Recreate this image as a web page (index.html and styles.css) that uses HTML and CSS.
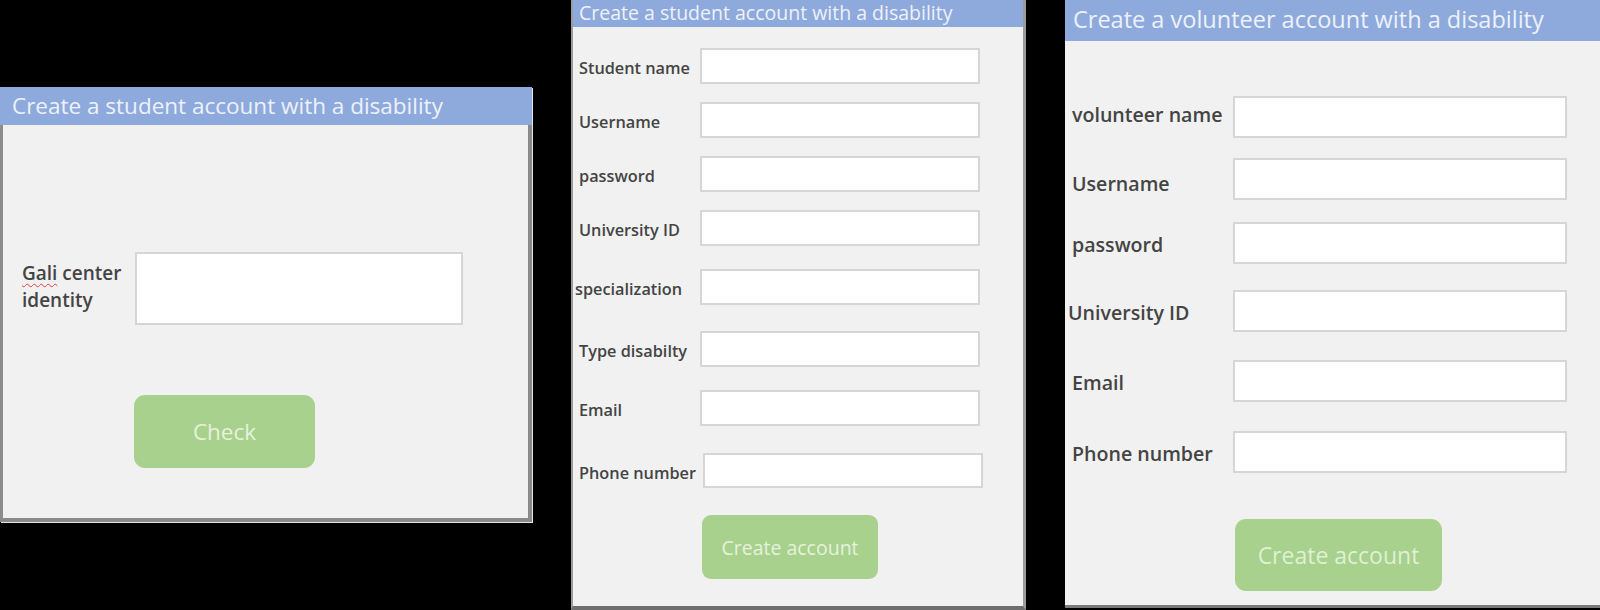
FILE: index.html
```html
<!DOCTYPE html>
<html lang="en">
<head>
<meta charset="utf-8">
<title>Account forms</title>
<link rel="stylesheet" href="styles.css">
</head>
<body>
<main class="canvas">
  <section class="panel panel-check">
    <header class="panel-title">Create a student account with a disability</header>
    <div class="panel-body">
      <div class="field">
        <label class="field-label"><span class="misspelled">Gali</span> center<br>identity</label>
        <input class="field-input" type="text">
      </div>
      <button class="btn" type="button">Check</button>
    </div>
  </section>

  <section class="panel panel-student">
    <header class="panel-title">Create a student account with a disability</header>
    <div class="panel-body">
      <div class="field"><label class="field-label">Student name</label><input class="field-input" type="text"></div>
      <div class="field"><label class="field-label">Username</label><input class="field-input" type="text"></div>
      <div class="field"><label class="field-label">password</label><input class="field-input" type="text"></div>
      <div class="field"><label class="field-label">University ID</label><input class="field-input" type="text"></div>
      <div class="field"><label class="field-label field-label-shift">specialization</label><input class="field-input" type="text"></div>
      <div class="field"><label class="field-label">Type disabilty</label><input class="field-input" type="text"></div>
      <div class="field"><label class="field-label">Email</label><input class="field-input" type="text"></div>
      <div class="field"><label class="field-label">Phone number</label><input class="field-input field-input-phone" type="text"></div>
      <button class="btn" type="button">Create account</button>
    </div>
  </section>

  <section class="panel panel-volunteer">
    <header class="panel-title">Create a volunteer account with a disability</header>
    <div class="panel-body">
      <div class="field"><label class="field-label field-label-raise">volunteer name</label><input class="field-input" type="text"></div>
      <div class="field"><label class="field-label field-label-drop">Username</label><input class="field-input" type="text"></div>
      <div class="field"><label class="field-label">password</label><input class="field-input" type="text"></div>
      <div class="field"><label class="field-label field-label-shift">University ID</label><input class="field-input" type="text"></div>
      <div class="field"><label class="field-label">Email</label><input class="field-input" type="text"></div>
      <div class="field"><label class="field-label">Phone number</label><input class="field-input" type="text"></div>
      <button class="btn" type="button">Create account</button>
    </div>
  </section>
</main>
</body>
</html>
```
FILE: styles.css
```css
* { box-sizing: border-box; }

html, body {
  margin: 0;
  padding: 0;
  background: #000;
  overflow: hidden;
}

body {
  width: 1600px;
  height: 610px;
  font-family: "Open Sans", "Noto Sans", sans-serif;
  color: #3b3b3b;
}

.canvas {
  display: flex;
  align-items: flex-start;
  gap: 39px;
  height: 610px;
}

.panel {
  flex-shrink: 0;
  background: #f1f1f1;
  display: flex;
  flex-direction: column;
}

.panel-title {
  background: #8eaadc;
  color: #edf1f9;
  white-space: nowrap;
  display: flex;
  align-items: center;
}

.panel-body {
  display: flex;
  flex-direction: column;
  align-items: flex-start;
}

.field {
  display: flex;
  align-items: center;
}

.field-label {
  flex-shrink: 0;
  white-space: nowrap;
  color: #444;
  font-weight: 600;
}

.field-input {
  margin: 0;
  padding: 0;
  background: #fff;
  border: 2px solid #d6d6d6;
  font: inherit;
  outline: none;
}

.btn {
  margin: 0;
  padding: 0;
  border: none;
  background: #a8d18d;
  color: #e6f2dd;
  font-family: inherit;
  cursor: pointer;
}

.misspelled {
  text-decoration: underline wavy #e04040;
  text-decoration-thickness: 1px;
  text-underline-offset: 3px;
}

/* ---------- Panel 1: Gali center check ---------- */
.panel-check {
  width: 532px;
  height: 435px;
  margin-top: 87px;
  border-left: 3px solid #8c8c8c;
  border-right: 4px solid #8a8a8a;
  border-bottom: 4px solid #8a8a8a;
  box-shadow: 1px 1px 0 #e6e6e6;
}
.panel-check .panel-title {
  height: 38px;
  font-size: 22.5px;
  margin-left: -3px;
  margin-right: -4px;
  padding-left: 12px;
  padding-bottom: 2px;
}
.panel-check .panel-body {
  padding: 127px 0 0 19px;
}
.panel-check .field-label {
  width: 113px;
  font-size: 19px;
  line-height: 27px;
  margin-top: -3px;
}
.panel-check .field-input {
  width: 328px;
  height: 73px;
}
.panel-check .btn {
  margin-top: 70px;
  margin-left: 112px;
  width: 181px;
  height: 73px;
  border-radius: 11px;
  font-size: 22.5px;
}

/* ---------- Panel 2: student account ---------- */
.panel-student {
  width: 455px;
  height: 610px;
  border-left: 2px solid #9b9b9b;
  border-right: 3px solid #9a9a9a;
  border-bottom: 4px solid #6e6e6e;
}
.panel-student .panel-title {
  height: 27px;
  padding-left: 6px;
  font-size: 19.5px;
  padding-bottom: 3px;
}
.panel-student .panel-body {
  padding: 21px 0 0 6px;
}
.panel-student .field-label {
  width: 121px;
  font-size: 16.3px;
  padding-top: 4px;
}
.panel-student .field-label-shift { margin-left: -4px; width: 125px; }
.panel-student .field-input {
  width: 280px;
  height: 36px;
}
.panel-student .field-input-phone { margin-left: 3px; height: 35px; }
.panel-student .field:nth-child(2),
.panel-student .field:nth-child(3),
.panel-student .field:nth-child(4) { margin-top: 18px; }
.panel-student .field:nth-child(5) { margin-top: 23px; }
.panel-student .field:nth-child(6) { margin-top: 26px; }
.panel-student .field:nth-child(7) { margin-top: 23px; }
.panel-student .field:nth-child(8) { margin-top: 27px; }
.panel-student .btn {
  margin-top: 27px;
  margin-left: 123px;
  width: 176px;
  height: 64px;
  border-radius: 9px;
  font-size: 19.5px;
}

/* ---------- Panel 3: volunteer account ---------- */
.panel-volunteer {
  width: 535px;
  height: 608px;
  border-bottom: 3px solid #7a7a7a;
}
.panel-volunteer .panel-title {
  height: 41px;
  padding-left: 8px;
  font-size: 23.5px;
  padding-bottom: 4px;
}
.panel-volunteer .panel-body {
  padding: 55px 0 0 7px;
}
.panel-volunteer .field-label {
  width: 161px;
  font-size: 19.6px;
  padding-top: 2px;
}
.panel-volunteer .field-label-raise { padding-top: 0; margin-top: -6px; }
.panel-volunteer .field-label-drop { padding-top: 8px; }
.panel-volunteer .field-label-shift { margin-left: -4px; width: 165px; }
.panel-volunteer .field-input {
  width: 334px;
  height: 42px;
}
.panel-volunteer .field:nth-child(2) { margin-top: 20px; }
.panel-volunteer .field:nth-child(3) { margin-top: 22px; }
.panel-volunteer .field:nth-child(4) { margin-top: 26px; }
.panel-volunteer .field:nth-child(5) { margin-top: 28px; }
.panel-volunteer .field:nth-child(6) { margin-top: 29px; }
.panel-volunteer .btn {
  margin-top: 46px;
  margin-left: 163px;
  width: 207px;
  height: 72px;
  border-radius: 11px;
  font-size: 23px;
  color: #dff0d3;
}
```
